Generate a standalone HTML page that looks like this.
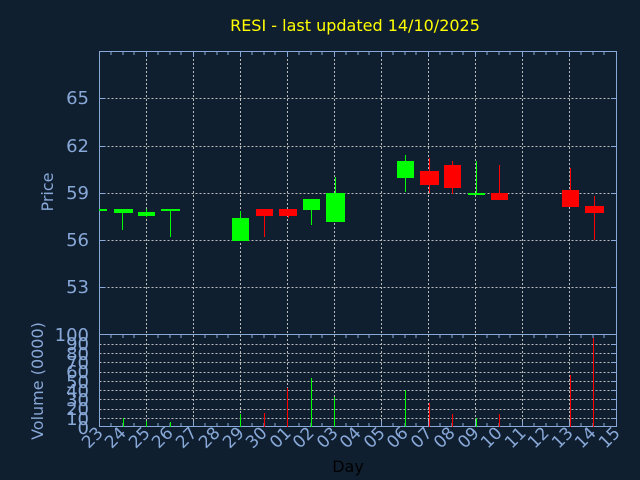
<!DOCTYPE html><html><head><style>body{margin:0;background:#101f30}svg{display:block}text{font-family:"DejaVu Sans","Liberation Sans",sans-serif}</style></head><body>
<svg width="640" height="480" xmlns="http://www.w3.org/2000/svg" shape-rendering="crispEdges">
<rect width="640" height="480" fill="#101f30"/>
<text x="355" y="31" fill="#ffff00" font-size="16" text-anchor="middle">RESI - last updated 14/10/2025</text>
<g stroke="#bbbbbb" stroke-dasharray="2,2" stroke-width="1">
<path d="M99.5 98.5H617M99.5 146.5H617M99.5 193.5H617M99.5 240.5H617M99.5 287.5H617"/>
<path d="M146.5 51V427M193.5 51V427M240.5 51V427M287.5 51V427M334.5 51V427M381.5 51V427M428.5 51V427M475.5 51V427M522.5 51V427M569.5 51V427"/>
<path d="M99.5 344.5H617M99.5 353.5H617M99.5 362.5H617M99.5 372.5H617M99.5 381.5H617M99.5 390.5H617M99.5 399.5H617M99.5 409.5H617M99.5 418.5H617"/>
</g>
<g stroke="#88a8d8" fill="none">
<rect x="99.5" y="51.5" width="517" height="375"/>
<path d="M99.5 334.5H617"/>
<path d="M111 51v4M123 51v4M134 51v4M158 51v4M170 51v4M181 51v4M205 51v4M217 51v4M228 51v4M252 51v4M264 51v4M275 51v4M299 51v4M311 51v4M322 51v4M346 51v4M358 51v4M369 51v4M393 51v4M405 51v4M416 51v4M440 51v4M452 51v4M463 51v4M487 51v4M499 51v4M510 51v4M534 51v4M546 51v4M557 51v4M581 51v4M593 51v4M604 51v4"/>
<path d="M146.5 51v6M193.5 51v6M240.5 51v6M287.5 51v6M334.5 51v6M381.5 51v6M428.5 51v6M475.5 51v6M522.5 51v6M569.5 51v6"/>
<path d="M111 334v4M123 334v4M134 334v4M158 334v4M170 334v4M181 334v4M205 334v4M217 334v4M228 334v4M252 334v4M264 334v4M275 334v4M299 334v4M311 334v4M322 334v4M346 334v4M358 334v4M369 334v4M393 334v4M405 334v4M416 334v4M440 334v4M452 334v4M463 334v4M487 334v4M499 334v4M510 334v4M534 334v4M546 334v4M557 334v4M581 334v4M593 334v4M604 334v4"/>
<path d="M111 427v-4M123 427v-4M134 427v-4M158 427v-4M170 427v-4M181 427v-4M205 427v-4M217 427v-4M228 427v-4M252 427v-4M264 427v-4M275 427v-4M299 427v-4M311 427v-4M322 427v-4M346 427v-4M358 427v-4M369 427v-4M393 427v-4M405 427v-4M416 427v-4M440 427v-4M452 427v-4M463 427v-4M487 427v-4M499 427v-4M510 427v-4M534 427v-4M546 427v-4M557 427v-4M581 427v-4M593 427v-4M604 427v-4"/>
<path d="M146.5 427v-6M193.5 427v-6M240.5 427v-6M287.5 427v-6M334.5 427v-6M381.5 427v-6M428.5 427v-6M475.5 427v-6M522.5 427v-6M569.5 427v-6"/>
<path d="M99 98.5h6M99 146.5h6M99 193.5h6M99 240.5h6M99 287.5h6M617 98.5h-6M617 146.5h-6M617 193.5h-6M617 240.5h-6M617 287.5h-6"/>
<path d="M611 344.5h6M611 353.5h6M611 362.5h6M611 372.5h6M611 381.5h6M611 390.5h6M611 399.5h6M611 409.5h6M611 418.5h6"/>
</g>
<g fill="#88a8d8" font-size="18" text-anchor="end">
<text x="89" y="104">65</text><text x="89" y="152">62</text><text x="89" y="199">59</text><text x="89" y="246">56</text><text x="89" y="293">53</text>
<text x="89" y="341">100</text><text x="89" y="350">90</text><text x="89" y="360">80</text><text x="89" y="369">70</text><text x="89" y="378">60</text><text x="89" y="388">50</text><text x="89" y="397">40</text><text x="89" y="406">30</text><text x="89" y="415">20</text><text x="89" y="425">10</text><text x="89" y="434">0</text>
</g>
<text transform="translate(53,192) rotate(-90)" fill="#88a8d8" font-size="16" text-anchor="middle">Price</text>
<text transform="translate(43,381) rotate(-90)" fill="#88a8d8" font-size="16" text-anchor="middle">Volume (0000)</text>
<text x="348" y="472" fill="#000" font-size="16" text-anchor="middle">Day</text>
<g fill="#88a8d8" font-size="17" text-anchor="end">
<text transform="translate(104,434) rotate(-45)">23</text><text transform="translate(127,434) rotate(-45)">24</text><text transform="translate(151,434) rotate(-45)">25</text><text transform="translate(174,434) rotate(-45)">26</text><text transform="translate(198,434) rotate(-45)">27</text><text transform="translate(221,434) rotate(-45)">28</text><text transform="translate(245,434) rotate(-45)">29</text><text transform="translate(268,434) rotate(-45)">30</text><text transform="translate(292,434) rotate(-45)">01</text><text transform="translate(315,434) rotate(-45)">02</text><text transform="translate(339,434) rotate(-45)">03</text><text transform="translate(362,434) rotate(-45)">04</text><text transform="translate(386,434) rotate(-45)">05</text><text transform="translate(409,434) rotate(-45)">06</text><text transform="translate(433,434) rotate(-45)">07</text><text transform="translate(456,434) rotate(-45)">08</text><text transform="translate(480,434) rotate(-45)">09</text><text transform="translate(503,434) rotate(-45)">10</text><text transform="translate(527,434) rotate(-45)">11</text><text transform="translate(550,434) rotate(-45)">12</text><text transform="translate(574,434) rotate(-45)">13</text><text transform="translate(597,434) rotate(-45)">14</text><text transform="translate(621,434) rotate(-45)">15</text>
</g>
<g fill="#00ff00" stroke="none">
<rect x="99" y="209" width="8" height="2"/>
<rect x="122" y="211" width="1" height="19"/><rect x="114" y="209" width="19" height="4"/>
<rect x="146" y="209" width="1" height="8"/><rect x="138" y="212" width="17" height="4"/>
<rect x="170" y="209" width="1" height="28"/><rect x="161" y="209" width="19" height="2"/>
<rect x="240" y="211" width="1" height="10"/><rect x="232" y="218" width="17" height="23"/>
<rect x="311" y="205" width="1" height="20"/><rect x="303" y="199" width="17" height="11"/>
<rect x="335" y="177" width="1" height="20"/><rect x="326" y="193" width="19" height="29"/>
<rect x="405" y="155" width="1" height="37"/><rect x="397" y="161" width="17" height="17"/>
<rect x="476" y="161" width="1" height="33"/><rect x="468" y="193" width="17" height="2"/>
</g>
<g fill="#ff0000">
<rect x="264" y="212" width="1" height="25"/><rect x="256" y="209" width="17" height="7"/>
<rect x="288" y="212" width="1" height="6"/><rect x="279" y="209" width="18" height="7"/>
<rect x="429" y="158" width="1" height="35"/><rect x="420" y="171" width="19" height="14"/>
<rect x="452" y="161" width="1" height="33"/><rect x="444" y="165" width="17" height="23"/>
<rect x="499" y="165" width="1" height="30"/><rect x="491" y="193" width="17" height="7"/>
<rect x="570" y="168" width="1" height="30"/><rect x="562" y="190" width="17" height="17"/>
<rect x="594" y="196" width="1" height="44"/><rect x="585" y="206" width="19" height="7"/>
</g>
<g fill="#00ff00">
<rect x="123" y="418" width="1" height="9"/><rect x="146" y="421" width="1" height="6"/><rect x="170" y="422" width="1" height="5"/><rect x="240" y="414" width="1" height="13"/><rect x="311" y="378" width="1" height="49"/><rect x="334" y="397" width="1" height="30"/><rect x="405" y="390" width="1" height="37"/><rect x="476" y="418" width="1" height="9"/>
</g>
<g fill="#ff0000">
<rect x="264" y="413" width="1" height="14"/><rect x="287" y="388" width="1" height="39"/><rect x="429" y="403" width="1" height="24"/><rect x="452" y="414" width="1" height="13"/><rect x="499" y="414" width="1" height="13"/><rect x="570" y="375" width="1" height="52"/><rect x="593" y="338" width="1" height="89"/>
</g>
</svg>
</body></html>
